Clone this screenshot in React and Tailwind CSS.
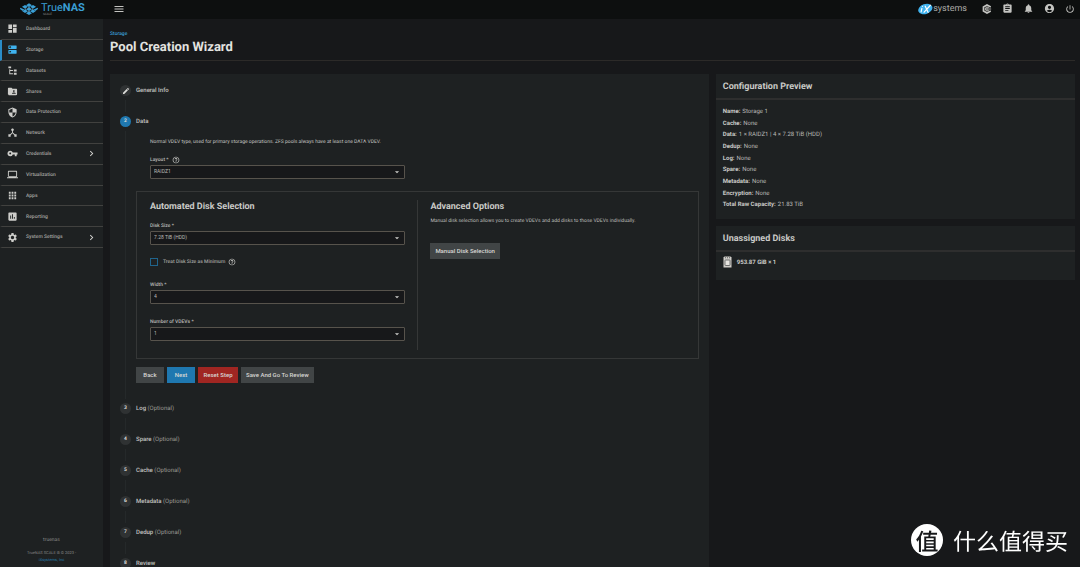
import { useState } from "react";
import {
  MdApps,
  MdAccountCircle,
  MdArrowDropDown,
  MdAssessment,
  MdAssignment,
  MdChevronRight,
  MdDashboard,
  MdDeviceHub,
  MdDns,
  MdEdit,
  MdFolderShared,
  MdHelpOutline,
  MdLaptop,
  MdMenu,
  MdNotifications,
  MdPowerSettingsNew,
  MdSecurity,
  MdSettings,
  MdVpnKey,
} from "react-icons/md";

function FileTreeIcon({ className }) {
  return (
    <svg viewBox="0 0 24 24" fill="currentColor" className={className}>
      <path d="M3,3H9V7H3V3M15,10H21V14H15V10M15,17H21V21H15V17M13,13H7V18H13V20H7L5,20V9H7V11H13V13Z" />
    </svg>
  );
}

function TrueCommandIcon({ className }) {
  return (
    <svg viewBox="0 0 24 24" fill="none" stroke="currentColor" className={className}>
      <path d="M21 7 12 2.500 3.500 7.200v9.600L12 21.500 21 17" strokeWidth="4" />
      <path d="M17 9.500 12 7 8 9.500v5l4 2.500 5-2.500" strokeWidth="2" />
      <path d="M7 12h15M12 7v10" strokeWidth="2" />
    </svg>
  );
}

function DiskIcon({ className }) {
  return (
    <svg viewBox="0 0 18 24" className={className}>
      <path d="M1 3 3 1h12l2 2v20H1z" fill="#cfcdc8" />
      <path d="M4 3.500h2M8 3.500h2M12 3.500h2" stroke="#3a3c3d" strokeWidth="1.500" />
      <rect x="4" y="8" width="10" height="11" rx="1" fill="#e6e4df" stroke="#4b4d4e" strokeWidth="1.500" />
    </svg>
  );
}

function TrueNasLogo() {
  return (
    <a href="#dashboard" className="flex items-center gap-[3px] pl-5">
      <svg viewBox="0 0 54 36" className="h-3 w-[18px]">
        <g fill="#3a9fd6">
          <path d="M27 1 36 6.500 27 12 18 6.500z" />
          <path d="M15 6 24 11.500 15 17 6 11.500z" />
          <path d="M39 6 48 11.500 39 17 30 11.500z" />
          <path d="M27 13 36 18.500 27 24 18 18.500z" />
          <path d="M1 14 13 19.500 8 24 0 18z" />
          <path d="M53 14 41 19.500 46 24 54 18z" />
          <path d="M15 19 24 24.500 15 30 7 25z" />
          <path d="M39 19 30 24.500 39 30 47 25z" />
          <path d="M27 25 36 30.500 27 36 18 30.500z" />
        </g>
        <g fill="#b5c3c9">
          <circle cx="27" cy="12.500" r="1.500" />
          <circle cx="17" cy="18" r="1.500" />
          <circle cx="37" cy="18" r="1.500" />
          <circle cx="27" cy="24.500" r="1.500" />
        </g>
      </svg>
      <span className="flex flex-col">
        <span className="text-[11px] leading-[11px] text-[#3a9fd6]">
          True<b>NAS</b>
        </span>
        <span className="pl-[2px] text-[3px] leading-[3px] text-[#8a8a88]">SCALE</span>
      </span>
    </a>
  );
}

function IxSystemsLogo() {
  return (
    <a href="#ixsystems" className="flex items-center text-[#a9a9a6]">
      <svg viewBox="0 0 45 36" className="h-3 w-[15px]">
        <ellipse cx="22" cy="18" rx="22" ry="15" fill="#3fb2ee" transform="rotate(-20 22 18)" />
        <path d="m12 15-3 13M14 9l-1 2M21 8l10 21M38 6 17 29" stroke="#fff" strokeWidth="3.500" />
      </svg>
      <span className="text-[9px] leading-[12px]">systems</span>
    </a>
  );
}

const menu = [
  { name: "Dashboard", icon: MdDashboard },
  { name: "Storage", icon: MdDns, active: true },
  { name: "Datasets", icon: FileTreeIcon },
  { name: "Shares", icon: MdFolderShared },
  { name: "Data Protection", icon: MdSecurity },
  { name: "Network", icon: MdDeviceHub },
  { name: "Credentials", icon: MdVpnKey, sub: true },
  { name: "Virtualization", icon: MdLaptop },
  { name: "Apps", icon: MdApps },
  { name: "Reporting", icon: MdAssessment },
  { name: "System Settings", icon: MdSettings, sub: true },
];

const summary = [
  ["Name", "Storage 1"],
  ["Cache", "None"],
  ["Data", "1 × RAIDZ1 | 4 × 7.28 TiB (HDD)"],
  ["Dedup", "None"],
  ["Log", "None"],
  ["Spare", "None"],
  ["Metadata", "None"],
  ["Encryption", "None"],
  ["Total Raw Capacity", "21.83 TiB"],
];

const nextSteps = [
  { number: 3, name: "Log", optional: true },
  { number: 4, name: "Spare", optional: true },
  { number: 5, name: "Cache", optional: true },
  { number: 6, name: "Metadata", optional: true },
  { number: 7, name: "Dedup", optional: true },
  { number: 8, name: "Review" },
];

function Sidebar() {
  return (
    <aside className="flex w-[103px] shrink-0 flex-col justify-between bg-[#1e2122]">
      <nav className="grid h-[229px] auto-rows-fr">
        {menu.map(({ name, icon: Icon, active, sub }) => (
          <a
            key={name}
            href={`#${name}`}
            className={`flex items-center border-b border-b-[#41413f] border-l-2 pl-[5px] pr-[6px] text-[5px] font-medium text-[#a3a3a0] ${
              active ? "border-l-[#2a8cc7]" : "border-l-transparent"
            }`}
          >
            <Icon className={`size-[11px] ${active ? "text-[#3fb2ee]" : "text-[#cdcdca]"}`} />
            <span className="grow pl-2 pt-[2px]">{name}</span>
            {sub && <MdChevronRight className="size-[11px] text-[#d5d5d2]" />}
          </a>
        ))}
      </nav>
      <footer className="flex flex-col items-center pb-1 text-[4px] leading-[7px] text-[#868787]">
        <span className="pb-[5px] text-[5px]">truenas</span>
        <span>TrueNAS SCALE ® © 2023 -</span>
        <a href="#ixsystems" className="text-[#2678a6]">
          iXsystems, Inc
        </a>
      </footer>
    </aside>
  );
}

function Step({ number, icon, active, title, optional, children }) {
  return (
    <li className="flex gap-[5px]">
      <div className="flex flex-col items-center">
        <span
          className={`flex size-[11px] shrink-0 items-center justify-center rounded-full text-[5px] font-bold text-[#dcdcd9] ${
            active ? "bg-[#1f78b0]" : "bg-[#2f3233]"
          }`}
        >
          {icon || number}
        </span>
        <span className="my-1 w-px grow bg-[#25292a]" />
      </div>
      <div className="min-h-[31px] min-w-0 grow">
        <h3 className="text-[6px] font-medium leading-[11px] text-[#c4c4c1]">
          {title}
          {optional && <span className="font-normal text-[#9c9a94]"> (Optional)</span>}
        </h3>
        {children}
      </div>
    </li>
  );
}

function SelectField({ id, label, help, options }) {
  const [value, setValue] = useState(options[0]);

  return (
    <div className="flex flex-col gap-px">
      <label
        htmlFor={id}
        className="flex items-center gap-[3px] text-[5px] font-medium leading-[8px] text-[#b9b9b6]"
      >
        {label} *
        {help && <MdHelpOutline className="size-[8px] text-[#cdcdca]" />}
      </label>
      <div className="relative">
        <select
          id={id}
          value={value}
          onChange={(e) => setValue(e.target.value)}
          className="block h-[14px] w-full appearance-none rounded-[1px] border border-[#57534c] bg-[#17181a] px-[3px] text-[5px] text-[#b9b9b6]"
        >
          {options.map((option) => (
            <option key={option}>{option}</option>
          ))}
        </select>
        <MdArrowDropDown className="pointer-events-none absolute right-[3px] top-[2px] size-[10px] text-[#cdcdca]" />
      </div>
    </div>
  );
}

function DataStep() {
  const [minimum, setMinimum] = useState(false);

  return (
    <>
      <div className="grid grid-cols-2 px-[14px] pt-[11px]">
        <p className="col-span-2 text-[5px] leading-[8px] text-[#c4c4c1]">
          Normal VDEV type, used for primary storage operations. ZFS pools always have at least one
          DATA VDEV.
        </p>
        <div className="pr-3 pt-[10px]">
          <SelectField id="layout" label="Layout" help options={["RAIDZ1", "RAIDZ2", "Mirror"]} />
        </div>
      </div>

      <div className="mt-3 grid grid-cols-2 border border-[#353737] px-[13px] py-2">
        <div className="flex flex-col pb-[9px] pr-3">
          <h4 className="pt-px text-[9px] font-bold leading-[12px] text-[#c9c9c6]">
            Automated Disk Selection
          </h4>
          <div className="pt-[9px]">
            <SelectField id="disk-size" label="Disk Size" options={["7.28 TiB (HDD)"]} />
          </div>
          <label className="flex items-center pt-[13px] text-[5px] font-medium leading-[8px] text-[#a3a3a0]">
            <input
              type="checkbox"
              checked={minimum}
              onChange={(e) => setMinimum(e.target.checked)}
              className="mr-[5px] size-2 appearance-none border border-[#20648c] checked:bg-[#1f78b0]"
            />
            Treat Disk Size as Minimum
            <MdHelpOutline className="ml-[3px] size-[8px] text-[#cdcdca]" />
          </label>
          <div className="pt-[15px]">
            <SelectField id="width" label="Width" options={["4", "3"]} />
          </div>
          <div className="pt-[14px]">
            <SelectField id="vdevs" label="Number of VDEVs" options={["1"]} />
          </div>
        </div>
        <div className="flex flex-col items-start border-l border-[#353737] pl-3">
          <h4 className="pt-px text-[9px] font-bold leading-[12px] text-[#c9c9c6]">
            Advanced Options
          </h4>
          <p className="pt-[4px] text-[5px] leading-[8px] text-[#bcbcb9]">
            Manual disk selection allows you to create VDEVs and add disks to those VDEVs
            individually.
          </p>
          <div className="pt-[18px]">
            <Button className="bg-[#414546] px-[5px]">Manual Disk Selection</Button>
          </div>
        </div>
      </div>

      <div className="flex gap-[3px] pb-5 pt-2">
        <Button className="w-7 bg-[#414546]">Back</Button>
        <Button className="w-7 bg-[#1f78b0]">Next</Button>
        <Button className="w-10 bg-[#a02622]">Reset Step</Button>
        <Button className="bg-[#414546] px-[5px]">Save And Go To Review</Button>
      </div>
    </>
  );
}

function Button({ className, children }) {
  return (
    <button
      type="button"
      className={`block h-4 text-[6px] font-medium leading-[16px] text-[#d8d8d5] ${className}`}
    >
      {children}
    </button>
  );
}

function Card({ title, children }) {
  return (
    <section className="bg-[#1e2122]">
      <h2 className="border-b-2 border-[#2e2e2e] px-[7px] pt-[3px] text-[9px] font-bold leading-[21px] text-[#c9c9c6]">
        {title}
      </h2>
      {children}
    </section>
  );
}

function App() {
  return (
    <div className="flex h-screen flex-col overflow-hidden bg-[#17181a] font-['Roboto',sans-serif] [text-rendering:geometricPrecision]">
      <header className="flex h-[19px] shrink-0 items-center justify-between bg-[#0d0f0f] pb-[2px] pr-[5px] text-[#c4c4c1]">
        <div className="flex items-center">
          <div className="w-[103px]">
            <TrueNasLogo />
          </div>
          <button type="button" aria-label="Toggle menu" className="ml-[10px]">
            <MdMenu className="size-3" />
          </button>
        </div>
        <div className="flex items-center gap-[10px]">
          <div className="pr-[5px]">
            <IxSystemsLogo />
          </div>
          <button type="button" aria-label="TrueCommand">
            <TrueCommandIcon className="size-[10px]" />
          </button>
          <button type="button" aria-label="Jobs">
            <MdAssignment className="size-[11px]" />
          </button>
          <button type="button" aria-label="Alerts">
            <MdNotifications className="size-[11px]" />
          </button>
          <button type="button" aria-label="Account">
            <MdAccountCircle className="size-[11px]" />
          </button>
          <button type="button" aria-label="Power">
            <MdPowerSettingsNew className="size-[10px]" />
          </button>
        </div>
      </header>

      <div className="flex min-h-0 grow">
        <Sidebar />
        <main className="flex min-w-0 grow flex-col overflow-hidden pl-[7px] pr-[5px] pt-[11px]">
          <div className="border-b border-[#2c2a28] pb-1">
            <a href="#storage" className="block text-[5px] font-medium leading-[8px] text-[#3a9fd6]">
              Storage
            </a>
            <h1 className="pt-px text-[13px] font-bold leading-[17px] text-[#e3e3e0]">
              Pool Creation Wizard
            </h1>
          </div>

          <div className="mt-[13px] grid grow grid-cols-[5fr_3fr] gap-[7px]">
            <section className="min-w-0 bg-[#1e2122] px-[10px] pt-[11px]">
              <ol>
                <Step icon={<MdEdit className="size-2" />} title="General Info" />
                <Step number={2} active title="Data">
                  <DataStep />
                </Step>
                {nextSteps.map((step) => (
                  <Step
                    key={step.number}
                    number={step.number}
                    title={step.name}
                    optional={step.optional}
                  />
                ))}
              </ol>
            </section>

            <div className="flex min-w-0 flex-col gap-[7px]">
              <Card title="Configuration Preview">
                <dl className="grid h-[119px] auto-rows-fr px-[7px] pb-2 pt-[6px] text-[6px] leading-[11px] text-[#b9b9b6]">
                  {summary.map(([label, value]) => (
                    <div key={label} className="flex gap-[2px]">
                      <dt className="font-bold text-[#c9c9c6]">{label}:</dt>
                      <dd>{value}</dd>
                    </div>
                  ))}
                </dl>
              </Card>
              <Card title="Unassigned Disks">
                <div className="flex items-center gap-[5px] px-[7px] pb-3 pt-1 text-[6px] font-bold text-[#c9c9c6]">
                  <DiskIcon className="h-3 w-[9px]" />
                  953.87 GiB × 1
                </div>
              </Card>
            </div>
          </div>
        </main>
      </div>

      <div className="fixed bottom-[11px] right-3 flex items-center gap-[10px] font-['Noto_Sans_CJK_SC',sans-serif] text-white">
        <span className="flex size-8 items-center justify-center rounded-full bg-white text-[23px] font-medium leading-[32px] text-[#17181a]">
          值
        </span>
        <span className="text-[23px] leading-[32px]">什么值得买</span>
      </div>
    </div>
  );
}

export default App;
